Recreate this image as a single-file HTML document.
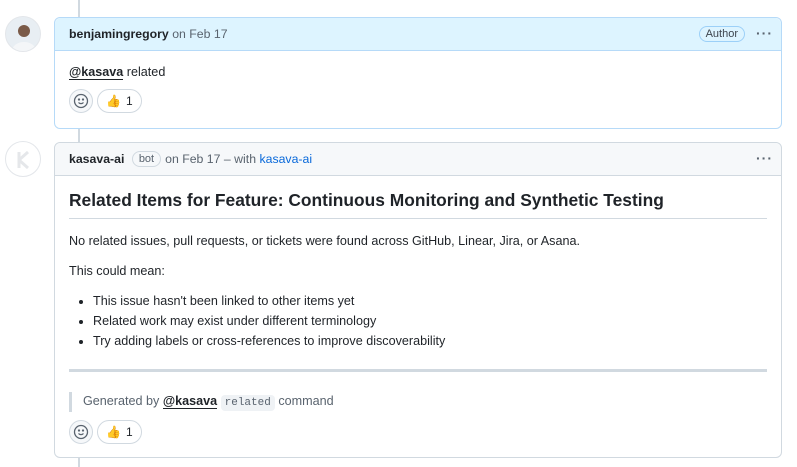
<!DOCTYPE html>
<html><head><meta charset="utf-8"><style>
*{box-sizing:border-box;margin:0;padding:0}
body{width:797px;height:467px;background:#fff;font-family:"Liberation Sans",sans-serif;color:#1f2328;font-size:12.6px;position:relative;overflow:hidden}
.line{position:absolute;left:78px;top:0;width:2px;height:467px;background:#d1d9e0}
.av{position:absolute;left:5px;width:36px;height:36px;border-radius:50%;border:1px solid #e3e6ea;background:#fff;overflow:hidden}
.box{position:absolute;left:54px;width:728px;border:1px solid #d1d9e0;border-radius:6px;background:#fff}
.hd{height:33px;border-bottom:1px solid #d1d9e0;background:#f6f8fa;display:flex;align-items:center;padding-left:14px;border-radius:6px 6px 0 0;position:relative;font-size:12.3px}
.b1{border-color:#b6daf8}.b1 .hd{background:#ddf4ff;border-color:#b6daf8}
.dots{position:absolute;right:8px;top:10px;font-size:14px;letter-spacing:1px;color:#59636e;font-weight:bold;line-height:10px}
.muted{color:#59636e}
.pill{border:1px solid #d1d9e0;border-radius:10px;padding:1px 6px;font-size:11px;color:#59636e;margin:0 4px}
.react{display:flex;gap:4px;align-items:center}
.emo{width:24px;height:24px;border-radius:50%;border:1px solid #d1d9e0;background:#f6f8fa;display:flex;align-items:center;justify-content:center}
.thumb{height:24px;border-radius:12px;border:1px solid #d1d9e0;padding:0 8px;display:flex;align-items:center;gap:5px;font-size:12px}
u{text-decoration:none;border-bottom:1px solid #1f2328;font-weight:bold}
p{line-height:18px}
</style></head><body>
<div class="line"></div>
<div class="av" style="top:16px;background:#e8eef3"><svg width="36" height="36"><circle cx="18" cy="14" r="6" fill="#7a5a48"/><ellipse cx="18" cy="34" rx="12" ry="9" fill="#f4f6f8"/></svg></div>
<div class="box b1" style="top:17px;height:112px">
 <div class="hd"><b>benjamingregory</b>&nbsp;<span class="muted">on Feb 17</span>
 <span class="pill" style="position:absolute;right:32px;top:8px;border-color:#9cd0f8;color:#3d444d">Author</span><span class="dots">···</span></div>
 <div style="padding:14px 14px 0"><u>@kasava</u> related</div>
 <div class="react" style="padding:10px 14px"><div class="emo"><svg width="16" height="16" viewBox="0 0 16 16" fill="none" stroke="#59636e" stroke-width="1.3"><circle cx="8" cy="8" r="6.5"/><path d="M5.5 9.5c1.3 1.5 3.7 1.5 5 0"/><circle cx="6" cy="6.5" r=".5" fill="#59636e"/><circle cx="10" cy="6.5" r=".5" fill="#59636e"/></svg></div><div class="thumb">👍<span>1</span></div></div>
</div>
<div class="av" style="top:141px"><svg width="36" height="36"><path d="M13 10v16M13 18l9-8M13 18l9 8" stroke="#e5e7ea" stroke-width="3" fill="none"/></svg></div>
<div class="box" style="top:142px;height:316px">
 <div class="hd"><b>kasava-ai</b>&nbsp;<span class="pill">bot</span><span class="muted">on Feb 17 – with <span style="color:#0969da">kasava-ai</span></span><span class="dots">···</span></div>
 <div style="padding:0 14px">
  <div style="font-size:17.4px;font-weight:bold;margin-top:14px;padding-bottom:7px;border-bottom:1px solid #d1d9e0">Related Items for Feature: Continuous Monitoring and Synthetic Testing</div>
  <p style="margin-top:13px">No related issues, pull requests, or tickets were found across GitHub, Linear, Jira, or Asana.</p>
  <p style="margin-top:12px">This could mean:</p>
  <ul style="margin-top:11px;padding-left:24px;line-height:20px"><li>This issue hasn't been linked to other items yet</li><li>Related work may exist under different terminology</li><li>Try adding labels or cross-references to improve discoverability</li></ul>
  <div style="height:3px;background:#d1d9e0;margin-top:18px"></div>
  <div style="margin-top:20px;border-left:3px solid #d1d9e0;padding-left:11px;color:#59636e;line-height:18px">Generated by <u style="color:#1f2328">@kasava</u> <code style="font-family:'Liberation Mono',monospace;font-size:11px;background:#eff2f5;padding:2px 4px;border-radius:4px">related</code> command</div>
  <div class="react" style="margin-top:8px"><div class="emo"><svg width="16" height="16" viewBox="0 0 16 16" fill="none" stroke="#59636e" stroke-width="1.3"><circle cx="8" cy="8" r="6.5"/><path d="M5.5 9.5c1.3 1.5 3.7 1.5 5 0"/><circle cx="6" cy="6.5" r=".5" fill="#59636e"/><circle cx="10" cy="6.5" r=".5" fill="#59636e"/></svg></div><div class="thumb">👍<span>1</span></div></div>
 </div>
</div>
</body></html>
